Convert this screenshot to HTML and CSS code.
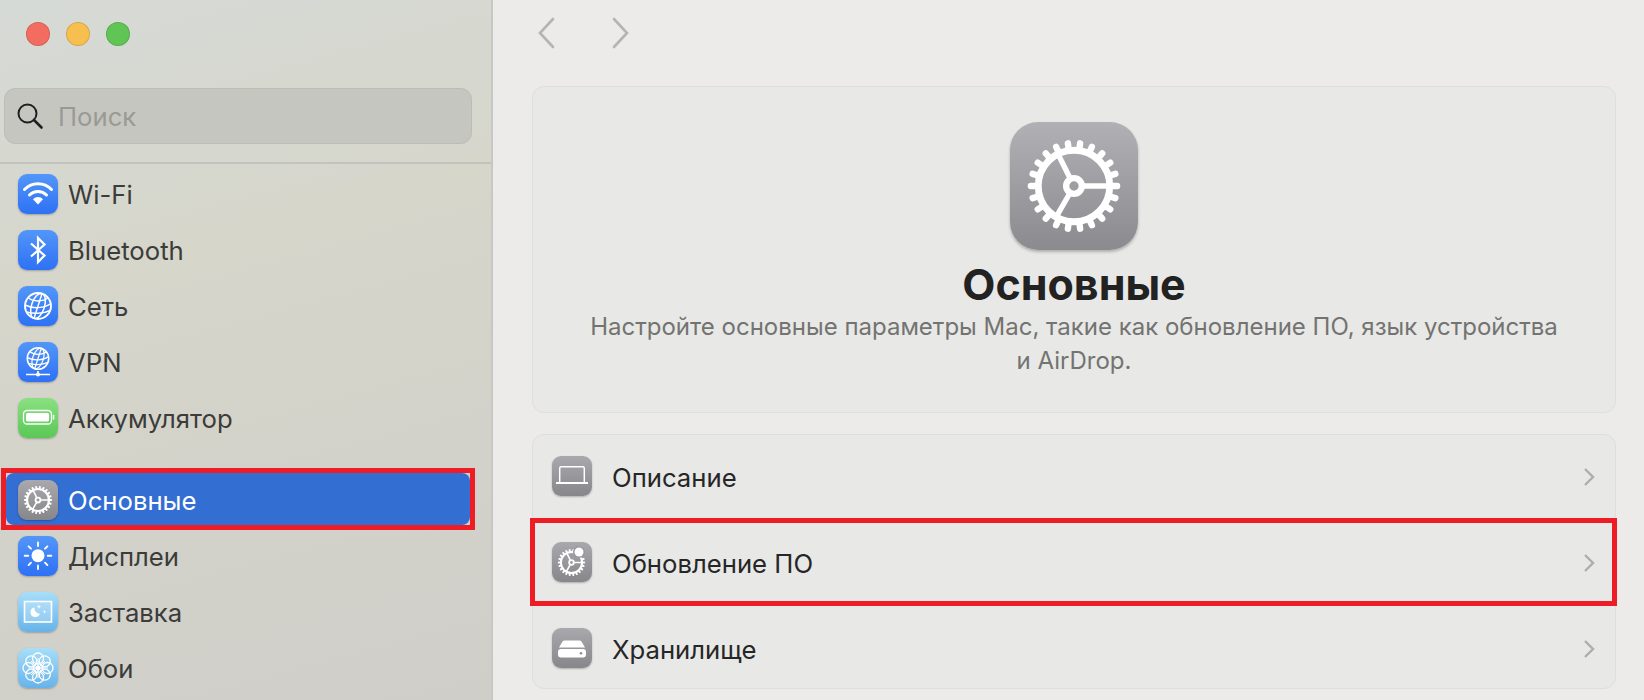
FILE: index.html
```html
<!DOCTYPE html>
<html lang="ru">
<head>
    <meta charset="UTF-8">
    <meta name="viewport" content="width=device-width, initial-scale=1.0">
    <title>Основные</title>
    <link rel="stylesheet" href="styles.css">
</head>
<body>

<svg class="defs" width="0" height="0">
    <symbol id="gear" viewBox="-50 -50 100 100">
        <g fill="none" stroke="#fff">
            <circle r="36.5" stroke-width="7"/>
            <circle r="8" stroke-width="6.5"/>
            <path stroke-width="5.5" d="M10 0H36M-5 8.7L-18 31.2M-4.5 -8.9L-16.5 -33"/>
            <g stroke-width="6.5" stroke-linecap="round">
                <path d="M-44 0h4M40 0h4"/>
                <path d="M-44 0h4M40 0h4" transform="rotate(16.36)"/>
                <path d="M-44 0h4M40 0h4" transform="rotate(32.73)"/>
                <path d="M-44 0h4M40 0h4" transform="rotate(49.09)"/>
                <path d="M-44 0h4M40 0h4" transform="rotate(65.45)"/>
                <path d="M-44 0h4M40 0h4" transform="rotate(81.82)"/>
                <path d="M-44 0h4M40 0h4" transform="rotate(98.18)"/>
                <path d="M-44 0h4M40 0h4" transform="rotate(114.55)"/>
                <path d="M-44 0h4M40 0h4" transform="rotate(130.91)"/>
                <path d="M-44 0h4M40 0h4" transform="rotate(147.27)"/>
                <path d="M-44 0h4M40 0h4" transform="rotate(163.64)"/>
            </g>
        </g>
    </symbol>
    <symbol id="globe" viewBox="0 0 40 40">
        <g fill="none" stroke="#fff" stroke-width="1.5">
            <circle cx="20" cy="20" r="13" stroke-width="1.9"/>
            <g transform="rotate(18 20 20)">
                <ellipse cx="20" cy="20" rx="6.5" ry="13"/>
                <path d="M20 7V33"/>
            </g>
            <path d="M10 11.5C15 16 25 16 30.5 11.5M7 19C15 23 26 22.5 33 17.5M8.5 26C15 28 25 28 32 24.5"/>
        </g>
    </symbol>
</svg>

<aside class="sidebar">
    <div class="traffic">
        <span class="light light-red"></span>
        <span class="light light-yellow"></span>
        <span class="light light-green"></span>
    </div>

    <div class="search">
        <svg class="search-icon" viewBox="0 0 28 28" fill="none" stroke="#1f1f1f" stroke-width="2">
            <circle cx="11.5" cy="11.5" r="9"/>
            <path d="M18 18L25.5 25.5" stroke-width="2.6" stroke-linecap="round"/>
        </svg>
        <span>Поиск</span>
    </div>

    <nav class="nav">
        <a class="nav-row">
            <span class="icon icon-blue">
                <svg viewBox="0 0 40 40" fill="none" stroke="#fff" stroke-width="3" stroke-linecap="round">
                    <path d="M6.5 15.5A19 19 0 0 1 33.5 15.5"/>
                    <path d="M11.5 21A12 12 0 0 1 28.5 21"/>
                    <path d="M20 30.5L15 25.2A7 7 0 0 1 25 25.2Z" fill="#fff" stroke="none"/>
                </svg>
            </span>
            Wi-Fi
        </a>
        <a class="nav-row">
            <span class="icon icon-blue">
                <svg viewBox="0 0 40 40" fill="none" stroke="#fff" stroke-width="2.2">
                    <path d="M13 13.5L26.5 25.5L20 32V8L26.5 14.5L13 26.5"/>
                </svg>
            </span>
            Bluetooth
        </a>
        <a class="nav-row">
            <span class="icon icon-blue">
                <svg viewBox="0 0 40 40"><use href="#globe"/></svg>
            </span>
            Сеть
        </a>
        <a class="nav-row">
            <span class="icon icon-blue">
                <svg viewBox="0 0 40 40">
                    <use href="#globe" x="3.5" y="0" width="33" height="33"/>
                    <path d="M20 29V32M8 32.5H32" stroke="#fff" stroke-width="1.6" fill="none"/>
                    <circle cx="20" cy="32.5" r="2" fill="#fff"/>
                </svg>
            </span>
            VPN
        </a>
        <a class="nav-row nav-row-last">
            <span class="icon icon-green">
                <svg viewBox="0 0 40 40" fill="none" stroke="#fff">
                    <rect x="5.5" y="12.5" width="28" height="13.5" rx="3.5" stroke-width="1.3"/>
                    <rect x="8" y="15" width="23" height="8.5" rx="1.5" fill="#fff" stroke="none"/>
                    <path d="M35.6 17.5V21" stroke-width="1.5" stroke-linecap="round"/>
                </svg>
            </span>
            Аккумулятор
        </a>
        <a class="nav-row nav-row-active">
            <span class="icon icon-gray">
                <svg class="gear-small" viewBox="0 0 40 40"><use href="#gear" x="5" y="5" width="30" height="30"/></svg>
            </span>
            Основные
        </a>
        <a class="nav-row">
            <span class="icon icon-blue">
                <svg viewBox="0 0 40 40" fill="none" stroke="#fff" stroke-width="1.9" stroke-linecap="round">
                    <circle cx="20" cy="19.7" r="6.5" fill="#fff" stroke="none"/>
                    <path d="M20 6.5V10M20 29.5V33M6.7 19.7H10.2M29.8 19.7H33.3M10.6 10.3L13 12.7M27 26.7L29.4 29.1M10.6 29.1L13 26.7M27 12.7L29.4 10.3"/>
                </svg>
            </span>
            Дисплеи
        </a>
        <a class="nav-row">
            <span class="icon icon-sky">
                <svg viewBox="0 0 40 40" fill="none" stroke="#fff">
                    <rect x="6.5" y="9.5" width="27" height="20.5" fill="#fff" fill-opacity=".22" stroke-width="1.6"/>
                    <path d="M16.5 15.5A4.8 4.8 0 1 0 21.8 21.8A5.6 5.6 0 0 1 16.5 15.5Z" fill="#fff" stroke="none"/>
                    <path d="M21 12.5l.6 1.6 1.6.6-1.6.6-.6 1.6-.6-1.6-1.6-.6 1.6-.6ZM26.5 18l.5 1.2 1.2.5-1.2.5-.5 1.2-.5-1.2-1.2-.5 1.2-.5Z" fill="#fff" stroke="none"/>
                </svg>
            </span>
            Заставка
        </a>
        <a class="nav-row">
            <span class="icon icon-sky">
                <svg viewBox="-20 -20 40 40" fill="none" stroke="#fff" stroke-width="1.3">
                    <ellipse cy="-9.5" rx="5.5" ry="5.5"/>
                    <ellipse cy="-9.5" rx="5.5" ry="5.5" transform="rotate(45)"/>
                    <ellipse cy="-9.5" rx="5.5" ry="5.5" transform="rotate(90)"/>
                    <ellipse cy="-9.5" rx="5.5" ry="5.5" transform="rotate(135)"/>
                    <ellipse cy="-9.5" rx="5.5" ry="5.5" transform="rotate(180)"/>
                    <ellipse cy="-9.5" rx="5.5" ry="5.5" transform="rotate(225)"/>
                    <ellipse cy="-9.5" rx="5.5" ry="5.5" transform="rotate(270)"/>
                    <ellipse cy="-9.5" rx="5.5" ry="5.5" transform="rotate(315)"/>
                    <path d="M0 -10V10M-10 0H10M-7 -7L7 7M-7 7L7 -7" stroke-width="1"/>
                    <circle r="2.6" fill="#fff" stroke="none"/>
                </svg>
            </span>
            Обои
        </a>
    </nav>
</aside>

<main class="main">
    <div class="toolbar">
        <svg class="nav-arrow" viewBox="0 0 18 32" fill="none"><path d="M16 2L3 16L16 30"/></svg>
        <svg class="nav-arrow" viewBox="0 0 18 32" fill="none"><path d="M2 2L15 16L2 30"/></svg>
    </div>

    <section class="card hero">
        <span class="hero-icon">
            <svg viewBox="0 0 128 128"><use href="#gear" x="15" y="15" width="98" height="98"/></svg>
        </span>
        <h1>Основные</h1>
        <p>Настройте основные параметры Mac, такие как обновление ПО, язык устройства<br>и AirDrop.</p>
    </section>

    <section class="card list">
        <a class="list-row">
            <span class="icon icon-gray">
                <svg viewBox="0 0 40 40" fill="none" stroke="#fff" stroke-width="1.5">
                    <path d="M7.7 26V12.2A1.5 1.5 0 0 1 9.2 10.7H30.8A1.5 1.5 0 0 1 32.3 12.2V26"/>
                    <path d="M4 27H36" stroke-width="2"/>
                </svg>
            </span>
            <span class="list-label">Описание</span>
            <svg class="chevron" viewBox="0 0 12 20" fill="none"><path d="M2 2L10 10L2 18"/></svg>
        </a>
        <a class="list-row list-row-marked">
            <span class="icon icon-gray">
                <svg viewBox="0 0 40 40">
                    <use href="#gear" x="5" y="6" width="29" height="29"/>
                    <circle cx="27" cy="10" r="6" fill="#98989c"/>
                    <circle cx="27" cy="10" r="4.5" fill="#fff"/>
                </svg>
            </span>
            <span class="list-label">Обновление ПО</span>
            <svg class="chevron" viewBox="0 0 12 20" fill="none"><path d="M2 2L10 10L2 18"/></svg>
        </a>
        <a class="list-row">
            <span class="icon icon-gray">
                <svg viewBox="0 0 40 40">
                    <path d="M10.5 13.5A2.5 2.5 0 0 1 12.8 12.5H27.2A2.5 2.5 0 0 1 29.5 13.5L33 19.5H7Z" fill="#fff"/>
                    <rect x="6" y="21" width="28" height="8.5" rx="3" fill="#fff"/>
                    <circle cx="29" cy="25.2" r="1.3" fill="#8d8d91"/>
                </svg>
            </span>
            <span class="list-label">Хранилище</span>
            <svg class="chevron" viewBox="0 0 12 20" fill="none"><path d="M2 2L10 10L2 18"/></svg>
        </a>
    </section>
</main>

</body>
</html>
```

FILE: styles.css
```css
* {
    box-sizing: border-box;
}

body {
    margin: 0;
    height: 700px;
    display: flex;
    overflow: hidden;
    background-color: #ecebe9;
    font-family: Inter, "Noto Sans", sans-serif;
    color: #262626;
}

.defs {
    position: absolute;
}

.sidebar {
    width: 493px;
    flex-shrink: 0;
    height: 700px;
    overflow: hidden;
    background: linear-gradient(165deg, #d6dad6 0%, #d6d6cb 35%, #cfcec9 100%);
    border-right: 2px solid #c8c8c3;
}

.traffic {
    display: flex;
    gap: 16px;
    padding: 22px 0 0 26px;
}

.light {
    width: 24px;
    height: 24px;
    border-radius: 50%;
    border: 1px solid rgba(0, 0, 0, 0.12);
}

.light-red { background-color: #f26d60; }
.light-yellow { background-color: #f7bf4f; }
.light-green { background-color: #61c555; }

.search {
    display: flex;
    align-items: center;
    gap: 14px;
    height: 56px;
    width: 468px;
    margin: 42px 0 0 4px;
    padding-left: 11px;
    background-color: #c6c6c0;
    border: 1px solid #bdbdb7;
    border-radius: 11px;
    color: #9a9a95;
    font-size: 25.7px;
}

.search-icon {
    width: 28px;
    height: 28px;
}

.nav {
    margin-top: 18px;
    padding: 4px 21px 0 6px;
    border-top: 2px solid #c3c3bd;
}

.nav-row {
    display: flex;
    align-items: center;
    gap: 10px;
    height: 52px;
    margin-bottom: 4px;
    padding: 0 12px;
    font-size: 25.7px;
    color: #3c3c3a;
}

.nav-row-last {
    margin-bottom: 29px;
}

.nav-row-active {
    position: relative;
    margin-bottom: 5px;
    padding-top: 2px;
    border-radius: 8px;
    background-color: #336ed3;
    color: #fff;
}

/* red mark put on the screenshot */
.nav-row-active::after {
    content: "";
    position: absolute;
    inset: -5px;
    border: 5px solid #ee1c25;
}

.icon {
    width: 40px;
    height: 40px;
    flex-shrink: 0;
    border-radius: 9px;
    box-shadow: 0 1px 2px rgba(0, 0, 0, 0.25);
}

.icon svg {
    display: block;
    width: 40px;
    height: 40px;
}

.icon-blue { background: linear-gradient(#5396f8, #2e71f5); }
.icon-green { background: linear-gradient(#8ae081, #5ac856); }
.icon-gray { background: linear-gradient(#a9a9ad, #87878b); }
.icon-sky { background: linear-gradient(#a8def9, #66b3ea); }

.main {
    flex: 1;
    padding: 0 28px 0 39px;
}

.toolbar {
    display: flex;
    gap: 57px;
    height: 86px;
    padding: 17px 0 0 5px;
}

.nav-arrow {
    width: 18px;
    height: 32px;
    stroke: #b4b4b2;
    stroke-width: 2.6;
    stroke-linecap: round;
}

.card {
    background-color: #e8e8e6;
    border: 1px solid #dededc;
    border-radius: 12px;
}

.hero {
    display: flex;
    flex-direction: column;
    align-items: center;
    height: 327px;
    padding-top: 35px;
    text-align: center;
}

.hero-icon {
    width: 128px;
    height: 128px;
    border-radius: 28px;
    background: linear-gradient(#b1b1b5, #8b8b8f);
    box-shadow: 0 2px 3px rgba(0, 0, 0, 0.25);
}

.hero-icon svg {
    display: block;
}

.hero h1 {
    margin: 9px 0 0;
    font-size: 43px;
    line-height: 50px;
    font-weight: 700;
    color: #222;
}

.hero p {
    margin: 1px 0 0;
    font-size: 24px;
    line-height: 34px;
    color: #737371;
}

.list {
    display: flex;
    flex-direction: column;
    gap: 46px;
    height: 255px;
    margin-top: 21px;
    padding: 21px 20px 20px 19px;
}

.list-row {
    position: relative;
    display: flex;
    align-items: center;
    gap: 20px;
}

.list-label {
    flex: 1;
    padding-top: 3px;
    font-size: 25.7px;
}

.list-row-marked::after {
    content: "";
    position: absolute;
    inset: -24px -22px;
    border: 5px solid #ee1c25;
}

.chevron {
    width: 12px;
    height: 20px;
    margin-top: 2px;
    stroke: #adadab;
    stroke-width: 2.4;
}
```
